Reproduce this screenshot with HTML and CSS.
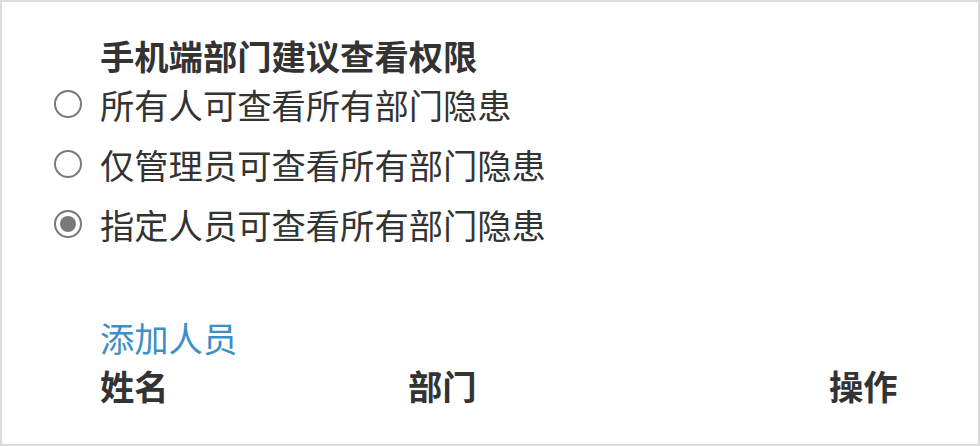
FILE: index.html
```html
<!DOCTYPE html>
<html lang="zh-CN">
<head>
<meta charset="utf-8">
<title>手机端部门建议查看权限</title>
<link rel="stylesheet" href="styles.css">
</head>
<body>
<div class="panel">
  <div class="title">手机端部门建议查看权限</div>
  <div class="options">
    <label class="option"><span class="radio"></span><span class="label">所有人可查看所有部门隐患</span></label>
    <label class="option"><span class="radio"></span><span class="label">仅管理员可查看所有部门隐患</span></label>
    <label class="option"><span class="radio checked"></span><span class="label">指定人员可查看所有部门隐患</span></label>
  </div>
  <div class="add-link">添加人员</div>
  <div class="table-head">
    <span>姓名</span>
    <span>部门</span>
    <span>操作</span>
  </div>
</div>
</body>
</html>
```

FILE: styles.css
```css
html, body {
  margin: 0;
  padding: 0;
  background: #ffffff;
}
body {
  font-family: "Noto Sans CJK SC", "Noto Sans", sans-serif;
  color: #333333;
}
.panel {
  width: 980px;
  height: 446px;
  box-sizing: border-box;
  border: 2px solid #dcdcdc;
  padding: 34px 0 0 52px;
  overflow: hidden;
}
.title {
  margin-left: 46px;
  font-size: 34.3px;
  font-weight: bold;
  line-height: 38px;
}
.options {
  display: flex;
  flex-direction: column;
}
.option {
  display: flex;
  align-items: center;
  height: 60px;
  gap: 18px;
}
.radio {
  width: 28px;
  height: 28px;
  box-sizing: border-box;
  border: 2px solid #7a7a7a;
  border-radius: 50%;
  display: flex;
  align-items: center;
  justify-content: center;
}
.radio.checked::after {
  content: "";
  width: 16px;
  height: 16px;
  border-radius: 50%;
  background: #7a7a7a;
}
.label {
  font-size: 34.3px;
  line-height: 40px;
}
.add-link {
  margin-top: 59px;
  margin-left: 46px;
  font-size: 34.3px;
  line-height: 48px;
  color: #3d8fc6;
}
.table-head {
  margin-left: 46px;
  display: grid;
  grid-template-columns: 308px 421px auto;
  font-size: 34.3px;
  font-weight: bold;
  line-height: 48px;
}
```
